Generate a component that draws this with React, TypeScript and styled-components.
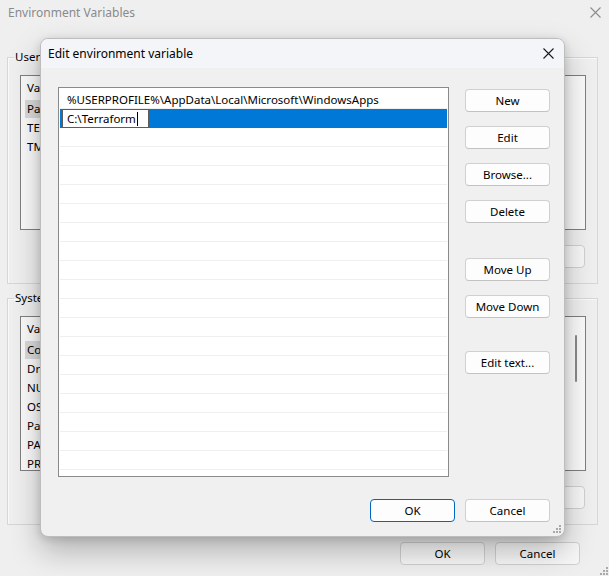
import React from 'react';
import styled, { createGlobalStyle } from 'styled-components';

// Data
const userVars = ['Path', 'TEMP', 'TMP'];

const systemVars = [
  'ComSpec',
  'DriverData',
  'NUMBER_OF_PROCESSORS',
  'OS',
  'Path',
  'PATHEXT',
  'PROCESSOR_ARCHITECTURE',
];

const pathEntries = ['%USERPROFILE%\\AppData\\Local\\Microsoft\\WindowsApps'];
const EMPTY_ROWS = 20;

const GlobalStyle = createGlobalStyle`
  html, body {
    margin: 0;
    padding: 0;
  }

  body {
    width: 609px;
    height: 576px;
    overflow: hidden;
    background: #efefef;
    font-family: 'Noto Sans', 'Open Sans', 'DejaVu Sans', sans-serif;
    font-size: 11.5px;
    color: #000;
  }
`;

const CloseIcon = ({ color }: { color: string }) => (
  <svg width='11' height='11' viewBox='0 0 11 11'>
    <path d='M0.5 0.5 L10.5 10.5 M10.5 0.5 L0.5 10.5' stroke={color} strokeWidth='1.1' fill='none' />
  </svg>
);

const GripIcon = () => (
  <svg width='8' height='8' viewBox='0 0 8 8'>
    {[
      [6, 0],
      [6, 3],
      [3, 3],
      [6, 6],
      [3, 6],
      [0, 6],
    ].map(([x, y]) => (
      <rect key={`${x}-${y}`} x={x} y={y} width='2' height='2' fill='#a9a9a9' />
    ))}
  </svg>
);

interface VarListProps {
  rows: string[];
  scroll?: boolean;
}

const VarList = ({ rows, scroll }: VarListProps) => (
  <ListView>
    <ListHeader>Variable</ListHeader>
    {rows.map((name, i) => (
      <VarRow key={name}>
        <VarName $selected={i === 0}>{name}</VarName>
      </VarRow>
    ))}
    {scroll && <ScrollThumb />}
  </ListView>
);

const App = () => {
  return (
    <>
      <GlobalStyle />
      <Screen>
        <Window>
          <WindowTitleBar>
            <span>Environment Variables</span>
            <CloseIcon color='#8c8c8c' />
          </WindowTitleBar>
          <WindowBody>
            <Group>
              <GroupLabel>User variables for User</GroupLabel>
              <VarList rows={userVars} />
              <GroupButtons>
                <BackButton>Delete</BackButton>
              </GroupButtons>
            </Group>
            <Group $spaced>
              <GroupLabel>System variables</GroupLabel>
              <VarList rows={systemVars} scroll />
              <GroupButtons>
                <BackButton>Delete</BackButton>
              </GroupButtons>
            </Group>
            <WindowFooter>
              <BackButton>OK</BackButton>
              <BackButton>Cancel</BackButton>
            </WindowFooter>
          </WindowBody>
          <WindowGrip>
            <GripIcon />
          </WindowGrip>
        </Window>

        <Dialog>
          <DialogTitleBar>
            <span>Edit environment variable</span>
            <CloseIcon color='#1a1a1a' />
          </DialogTitleBar>
          <DialogBody>
            <PathList>
              {pathEntries.map((entry) => (
                <PathRow key={entry}>{entry}</PathRow>
              ))}
              <PathRow $selected>
                <EditBox>
                  C:\Terraform
                  <Caret />
                </EditBox>
              </PathRow>
              {Array.from({ length: EMPTY_ROWS }).map((_, i) => (
                <PathRow key={i} />
              ))}
            </PathList>
            <SideButtons>
              <DialogButton>New</DialogButton>
              <DialogButton>Edit</DialogButton>
              <DialogButton>Browse...</DialogButton>
              <DialogButton>Delete</DialogButton>
              <DialogButton $offset={21}>Move Up</DialogButton>
              <DialogButton>Move Down</DialogButton>
              <DialogButton $offset={19}>Edit text...</DialogButton>
            </SideButtons>
          </DialogBody>
          <DialogFooter>
            <DialogButton $primary>OK</DialogButton>
            <DialogButton>Cancel</DialogButton>
          </DialogFooter>
          <DialogGrip>
            <GripIcon />
          </DialogGrip>
        </Dialog>
      </Screen>
    </>
  );
};

// Styled
const Screen = styled.div`
  position: relative;
  width: 609px;
  height: 576px;
  overflow: hidden;
`;

const Window = styled.div`
  position: relative;
  display: flex;
  flex-direction: column;
  width: 609px;
  height: 576px;
  background: #efefef;
`;

const WindowTitleBar = styled.div`
  display: flex;
  align-items: center;
  justify-content: space-between;
  height: 24px;
  padding: 0 8px;
  font-size: 12px;
  color: #8a8a8a;
`;

const WindowBody = styled.div`
  display: flex;
  flex-direction: column;
  padding: 25px 11px 0 7px;
`;

const Group = styled.fieldset<{ $spaced?: boolean }>`
  display: flex;
  flex-direction: column;
  box-sizing: border-box;
  height: 235px;
  margin: ${({ $spaced }) => ($spaced ? '6px' : '0')} 0 0;
  padding: 0 11px 0 12px;
  border: 1px solid #d6d6d6;
  box-shadow: inset 1px 1px 0 #f9f9f9;
  min-width: 0;
`;

const GroupLabel = styled.legend`
  margin-left: -6px;
  padding: 0 1px;
  line-height: 16px;
`;

const ListView = styled.div`
  position: relative;
  box-sizing: border-box;
  height: 155px;
  margin-top: 10px;
  border: 1px solid #7f7f7f;
  background: #fafafa;
  overflow: hidden;
`;

const ListHeader = styled.div`
  display: flex;
  height: 23px;
  align-items: center;
  padding-left: 6px;
`;

const VarRow = styled.div`
  display: flex;
  align-items: center;
  height: 19px;
  padding-left: 4px;
`;

const VarName = styled.span<{ $selected?: boolean }>`
  padding: 1px 3px 2px 2px;
  white-space: nowrap;
  background: ${({ $selected }) => ($selected ? '#dadada' : 'transparent')};
`;

const ScrollThumb = styled.div`
  position: absolute;
  right: 8px;
  top: 18px;
  width: 2px;
  height: 47px;
  border-radius: 1px;
  background: #8a8a8a;
`;

const GroupButtons = styled.div`
  display: flex;
  justify-content: flex-end;
  gap: 10px;
  margin-top: 15px;
  margin-right: 1px;
`;

const BackButton = styled.div`
  display: flex;
  align-items: center;
  justify-content: center;
  box-sizing: border-box;
  width: 85px;
  height: 23px;
  border: 1px solid #d0d0d0;
  border-radius: 4px;
  background: #f7f7f7;
`;

const WindowFooter = styled.div`
  display: flex;
  justify-content: flex-end;
  gap: 10px;
  margin-top: 17px;
  padding-right: 18px;
`;

const WindowGrip = styled.div`
  position: absolute;
  right: 1px;
  bottom: 1px;
  line-height: 0;
`;

const Dialog = styled.div`
  position: absolute;
  left: 40px;
  top: 38px;
  display: flex;
  flex-direction: column;
  box-sizing: border-box;
  width: 525px;
  height: 499px;
  border: 1px solid #bdbdbd;
  border-radius: 8px;
  background: #f0f0f0;
  overflow: hidden;
  box-shadow: 0 14px 30px rgba(0, 0, 0, 0.26), 0 2px 8px rgba(0, 0, 0, 0.14);
`;

const DialogTitleBar = styled.div`
  display: flex;
  align-items: center;
  justify-content: space-between;
  height: 29px;
  padding: 0 10px 0 7px;
  background: #f3f5f9;
  font-size: 12px;
  color: #000;
`;

const DialogBody = styled.div`
  display: flex;
  gap: 16px;
  padding: 19px 14px 0 17px;
`;

const PathList = styled.div`
  box-sizing: border-box;
  width: 391px;
  height: 390px;
  padding: 2px 1px 0;
  border: 1px solid #8a8a8a;
  background: #fff;
  overflow: hidden;
`;

const PathRow = styled.div<{ $selected?: boolean }>`
  display: flex;
  align-items: center;
  box-sizing: border-box;
  height: 19px;
  padding-left: ${({ $selected }) => ($selected ? '2px' : '7px')};
  border-bottom: 1px solid ${({ $selected }) => ($selected ? '#0078d7' : '#efefef')};
  background: ${({ $selected }) => ($selected ? '#0078d7' : '#fff')};
  white-space: nowrap;
`;

const EditBox = styled.div`
  display: flex;
  align-items: center;
  box-sizing: border-box;
  width: 87px;
  height: 19px;
  margin-top: 1px;
  padding-left: 4px;
  border: 1px solid #5c5c5c;
  background: #fff;
  color: #000;
`;

const Caret = styled.span`
  display: inline-block;
  width: 1px;
  height: 14px;
  margin-left: 1px;
  background: #000;
`;

const SideButtons = styled.div`
  display: flex;
  flex-direction: column;
  gap: 14px;
  padding-top: 2px;
`;

const DialogButton = styled.div<{ $primary?: boolean; $offset?: number }>`
  display: flex;
  align-items: center;
  justify-content: center;
  box-sizing: border-box;
  width: 85px;
  height: 23px;
  margin-top: ${({ $offset }) => $offset ?? 0}px;
  border: 1px solid ${({ $primary }) => ($primary ? '#0067c0' : '#d0d0d0')};
  border-bottom-color: ${({ $primary }) => ($primary ? '#0067c0' : '#c2c2c2')};
  border-radius: 4px;
  background: #fdfdfd;
`;

const DialogFooter = styled.div`
  display: flex;
  justify-content: flex-end;
  gap: 10px;
  padding: 22px 14px 0 0;
`;

const DialogGrip = styled.div`
  position: absolute;
  right: 3px;
  bottom: 3px;
  line-height: 0;
`;

export default App;
